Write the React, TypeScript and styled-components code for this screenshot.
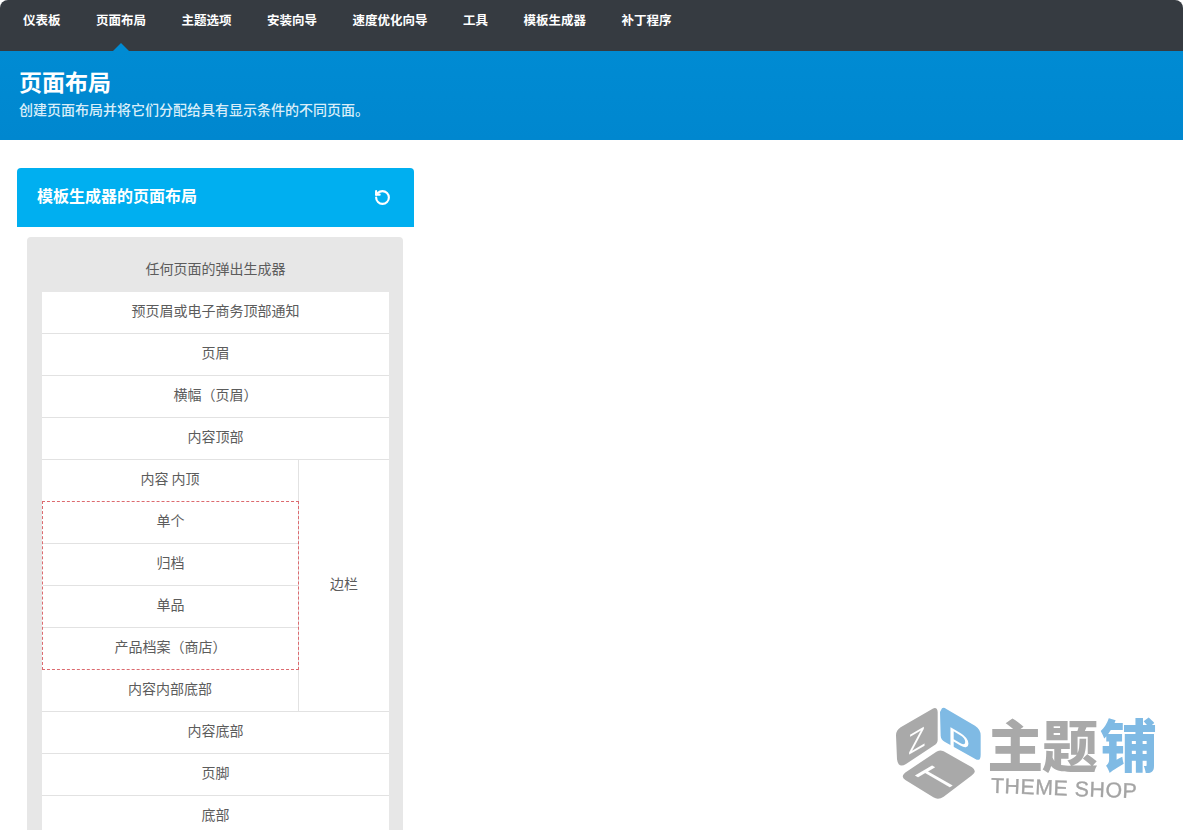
import React from 'react'
import styled, { createGlobalStyle } from 'styled-components'
import { RotateCcw } from 'lucide-react'

const GlobalS = createGlobalStyle`
  html, body {
    margin: 0;
    padding: 0;
    background: #fff;
    overflow: hidden;
  }

  body {
    font-family: "Noto Sans CJK SC", "Liberation Sans", sans-serif;
    font-size: 14px;
    color: #5c5c5c;
  }
`;

const PageS = styled.div`
  position: relative;
  height: 830px;
  overflow: hidden;
`;

const NavS = styled.nav`
  display: flex;
  align-items: center;
  height: 51px;
  padding: 0 5.25px;
  background: #363b41;
  border-radius: 8px 8px 0 0;
`;

const NavItem = styled.a<{ $active?: boolean }>`
  position: relative;
  display: flex;
  align-items: center;
  height: 100%;
  padding: 0 17.75px 12px;
  box-sizing: border-box;
  color: #fff;
  font-size: 12.5px;
  font-weight: 700;
  line-height: 40px;

  ${(p) => p.$active && `
    &::after {
      content: '';
      position: absolute;
      left: 50%;
      bottom: 0;
      margin-left: -8px;
      border-left: 8px solid transparent;
      border-right: 8px solid transparent;
      border-bottom: 8px solid #008bd3;
    }
  `}
`;

const HeroS = styled.header`
  display: flex;
  flex-direction: column;
  justify-content: center;
  gap: 4px;
  height: 89px;
  padding: 0 19px 6px;
  box-sizing: border-box;
  color: #fff;
  background: linear-gradient(#008bd3, #0087cf);

  h1 {
    margin: 0;
    font-size: 23px;
    font-weight: 700;
    line-height: 28px;
  }

  p {
    margin: 0;
    font-size: 14px;
    font-weight: 500;
    line-height: 20px;
    color: #d9eef9;
  }
`;

const MainS = styled.main`
  width: 397px;
  margin: 28px 0 0 17px;
`;

const PanelHead = styled.div`
  display: flex;
  align-items: center;
  justify-content: space-between;
  height: 59px;
  padding: 0 23px 6px 20px;
  box-sizing: border-box;
  background: #00aff0;
  border-radius: 4px 4px 0 0;
  color: #fff;
  font-size: 16px;
  font-weight: 700;

  svg {
    margin-top: 6px;
  }
`;

const BuilderS = styled.section`
  margin: 10px 11px 0 10px;
  padding: 0 14px 0 15px;
  background: #e7e7e7;
  border-radius: 4px 4px 0 0;
`;

const BuilderTitle = styled.div`
  height: 55px;
  line-height: 62px;
  text-align: center;
`;

const RowsS = styled.div`
  background: #fff;
`;

const Row = styled.div<{ $flat?: boolean }>`
  height: ${(p) => (p.$flat ? 41 : 42)}px;
  box-sizing: border-box;
  line-height: 36px;
  text-align: center;
  border-bottom: ${(p) => (p.$flat ? 'none' : '1px solid #e2e2e2')};
`;

const SplitS = styled.div`
  display: flex;
  border-bottom: 1px solid #e2e2e2;
`;

const ContentCol = styled.div`
  width: 256px;
`;

const DashedBox = styled.div`
  width: 257px;
  box-sizing: border-box;
  position: relative;
  z-index: 1;
  border: 1px dashed #dc6a6f;

  ${Row}:last-child {
    height: 41px;
    border-bottom: none;
  }
`;

const SidebarCol = styled.div`
  display: flex;
  align-items: center;
  justify-content: center;
  flex: 1;
  padding-bottom: 6px;
  border-left: 1px solid #e2e2e2;
`;

const LogoS = styled.svg`
  position: absolute;
  left: 880px;
  top: 690px;
  filter: blur(0.5px);
`;

function Watermark() {
  return (
    <LogoS width={303} height={140} viewBox='0 0 909 420'>
      <path fill='#a9a9a9' d='M158 56Q172 50 173 66L173 150Q173 160 163 166L78 222Q55 236 51 208L48 136Q48 121 62 112Z' />
      <path fill='#7fbae4' d='M186 55Q191 51 199 57L285 107Q302 118 302 136L302 194Q302 216 286 207L195 156Q182 148 182 137L180 66Z' />
      <path fill='#a9a9a9' d='M168 186Q178 178 191 184L276 232Q293 244 276 256L191 320Q175 331 160 322L76 270Q61 261 75 248Z' />
      <text transform='translate(85 195) skewY(-30)' fill='#fff' fontFamily='"Liberation Sans", sans-serif' fontSize={84}>Z</text>
      <text transform='translate(203 168) skewY(30) scale(1.2 1.05)' fill='#fff' fontFamily='"Liberation Sans", sans-serif' fontSize={84}>P</text>
      <text transform='matrix(1.08 -0.625 1.44 0.83 186 305)' fill='#fff' fontFamily='"Liberation Sans", sans-serif' fontSize={84}>T</text>
      <text x={322} y={232} fill='#a9a9a9' fontFamily='"Noto Sans CJK SC", sans-serif' fontWeight={900} fontSize={168} textLength={332}>主题</text>
      <text x={660} y={232} fill='#7fbae4' fontFamily='"Noto Sans CJK SC", sans-serif' fontWeight={900} fontSize={172}>铺</text>
      <text x={332} y={308} transform='rotate(2.2 332 308)' fill='#a4a4a4' stroke='#a4a4a4' strokeWidth={1} fontFamily='"Liberation Sans", sans-serif' fontSize={64} textLength={438}>THEME SHOP</text>
    </LogoS>
  )
}

const navItems = ['仪表板', '页面布局', '主题选项', '安装向导', '速度优化向导', '工具', '模板生成器', '补丁程序'];

export default function App() {
  return (
    <PageS>
      <GlobalS />
      <NavS>
        {navItems.map((item, index) => (
          <NavItem key={item} $active={index === 1}>{item}</NavItem>
        ))}
      </NavS>
      <HeroS>
        <h1>页面布局</h1>
        <p>创建页面布局并将它们分配给具有显示条件的不同页面。</p>
      </HeroS>
      <MainS>
        <PanelHead>
          模板生成器的页面布局
          <RotateCcw size={17} strokeWidth={3} />
        </PanelHead>
        <BuilderS>
          <BuilderTitle>任何页面的弹出生成器</BuilderTitle>
          <RowsS>
            <Row>预页眉或电子商务顶部通知</Row>
            <Row>页眉</Row>
            <Row>横幅（页眉）</Row>
            <Row>内容顶部</Row>
            <SplitS>
              <ContentCol>
                <Row $flat>内容 内顶</Row>
                <DashedBox>
                  <Row>单个</Row>
                  <Row>归档</Row>
                  <Row>单品</Row>
                  <Row>产品档案（商店）</Row>
                </DashedBox>
                <Row $flat>内容内部底部</Row>
              </ContentCol>
              <SidebarCol>边栏</SidebarCol>
            </SplitS>
            <Row>内容底部</Row>
            <Row>页脚</Row>
            <Row>底部</Row>
          </RowsS>
        </BuilderS>
      </MainS>
      <Watermark />
    </PageS>
  )
}
